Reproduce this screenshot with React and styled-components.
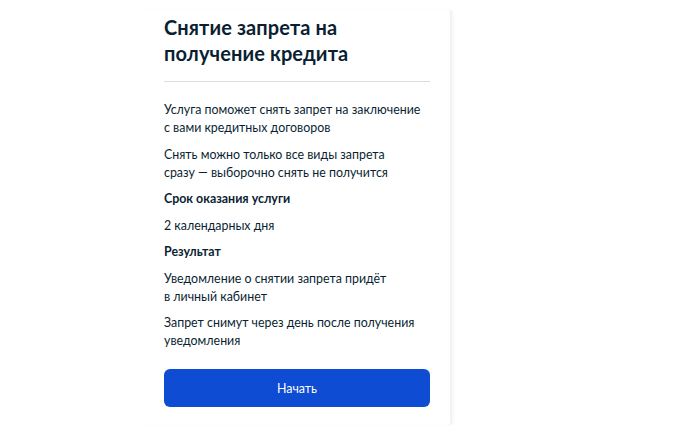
import React from 'react'
import styled, { createGlobalStyle } from 'styled-components'

const Global = createGlobalStyle`
  body {
    margin: 0;
    background: #fff;
    font-family: Lato, "Noto Sans", sans-serif;
    color: #0b1f33;
  }
`

const Page = styled.div`
  width: 700px;
  height: 439px;
  padding-top: 10px;
  box-sizing: border-box;
  background: #fff;
`

const Card = styled.div`
  margin-left: 140px;
  width: 312px;
  height: 415px;
  box-sizing: border-box;
  padding: 4px 20px 0 24px;
  background: #fff;
  border-right: 2px solid #f1f2f4;
  box-shadow: 2px 0 3px rgba(0, 0, 0, 0.03);
  border-radius: 0 4px 4px 0;
`

const Title = styled.h1`
  margin: 0;
  font-size: 20px;
  line-height: 26px;
  font-weight: 700;
  letter-spacing: 0.1px;
`

const Divider = styled.hr`
  margin: 15px 0 19px;
  border: none;
  border-top: 1px solid #dcdcdc;
`

const Text = styled.p`
  margin: 0 0 8.5px;
  font-size: 12.4px;
  line-height: 18px;
  white-space: nowrap;
  font-weight: ${p => (p.$bold ? 700 : 400)};
`

const Button = styled.button`
  display: block;
  width: 100%;
  height: 38px;
  margin-top: 19px;
  border: none;
  border-radius: 6px;
  background: #0d4cd3;
  color: #fff;
  font-family: inherit;
  font-size: 12.4px;
`

export default function App() {
  return (
    <Page>
      <Global />
      <Card>
        <Title>Снятие запрета на<br />получение кредита</Title>
        <Divider />
        <Text>Услуга поможет снять запрет на заключение<br />с вами кредитных договоров</Text>
        <Text>Снять можно только все виды запрета<br />сразу — выборочно снять не получится</Text>
        <Text $bold>Срок оказания услуги</Text>
        <Text>2 календарных дня</Text>
        <Text $bold>Результат</Text>
        <Text>Уведомление о снятии запрета придёт<br />в личный кабинет</Text>
        <Text>Запрет снимут через день после получения<br />уведомления</Text>
        <Button>Начать</Button>
      </Card>
    </Page>
  )
}
